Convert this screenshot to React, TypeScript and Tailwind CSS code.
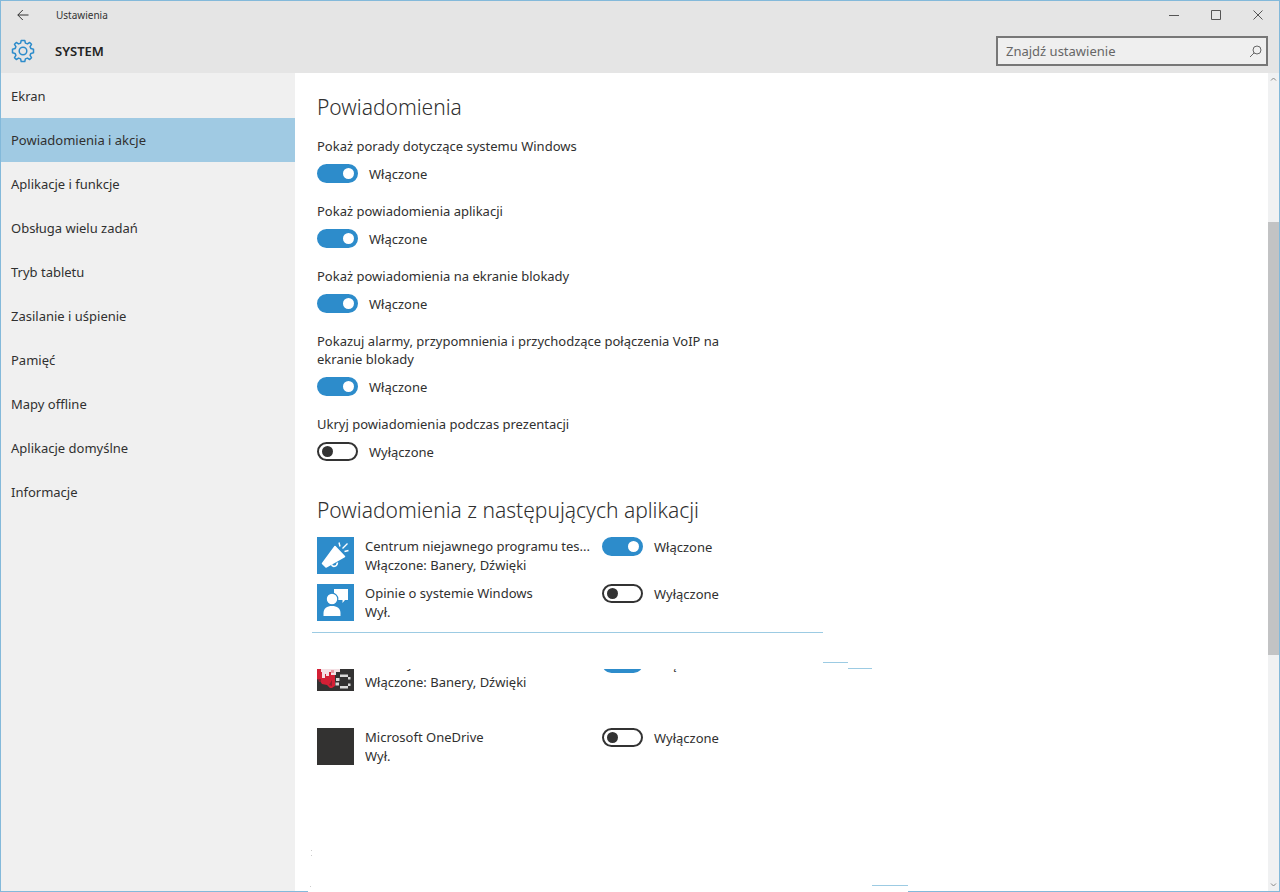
import { ReactNode, useState } from "react";

const navItems = [
  "Ekran",
  "Powiadomienia i akcje",
  "Aplikacje i funkcje",
  "Obsługa wielu zadań",
  "Tryb tabletu",
  "Zasilanie i uśpienie",
  "Pamięć",
  "Mapy offline",
  "Aplikacje domyślne",
  "Informacje",
];

const settings = [
  { id: "tips", label: "Pokaż porady dotyczące systemu Windows", on: true },
  { id: "apps", label: "Pokaż powiadomienia aplikacji", on: true },
  { id: "lock", label: "Pokaż powiadomienia na ekranie blokady", on: true },
  {
    id: "alarms",
    label: "Pokazuj alarmy, przypomnienia i przychodzące połączenia VoIP na ekranie blokady",
    on: true,
  },
  { id: "presentation", label: "Ukryj powiadomienia podczas prezentacji", on: false },
];

function Toggle({ id, initial, label }: { id: string; initial: boolean; label?: string }) {
  const [on, setOn] = useState(initial);
  return (
    <div className="flex h-[19px] items-center gap-[11px]">
      <input
        id={id}
        type="checkbox"
        role="switch"
        aria-label={label}
        checked={on}
        onChange={(e) => setOn(e.target.checked)}
        className="h-[19px] w-[41px] shrink-0 appearance-none rounded-full border-2 border-[#333] bg-white before:mt-[2px] before:ml-[3px] before:block before:size-[11px] before:rounded-full before:bg-[#333] checked:border-[#2d8ccb] checked:bg-[#2d8ccb] checked:before:ml-[24px] checked:before:bg-white"
      />
      <label htmlFor={id}>{on ? "Włączone" : "Wyłączone"}</label>
    </div>
  );
}

function AppRow({
  id,
  icon,
  name,
  status,
  on,
}: {
  id: string;
  icon: ReactNode;
  name: ReactNode;
  status: string;
  on: boolean;
}) {
  return (
    <li className="flex h-[37px] items-start">
      {icon}
      <div className="ml-[11px] w-[237px] shrink-0 pr-2 leading-[19px]">
        <p className="truncate">{name}</p>
        <p className="truncate">{status}</p>
      </div>
      <Toggle id={id} initial={on} label={status} />
    </li>
  );
}

function MegaphoneIcon() {
  return (
    <svg className="size-[37px] shrink-0" viewBox="0 0 37 37" aria-hidden="true">
      <rect width="37" height="37" fill="#2d8ccb" />
      <path d="M18 9.500 27.500 19.500 9 30 5.500 26.500Z" fill="#fff" stroke="#fff" strokeWidth="1.500" strokeLinejoin="round" />
      <path d="M14.500 27.500c1 3 5.500 2.500 6-2" fill="none" stroke="#fff" strokeWidth="1.600" />
      <path d="m23 9.500-1-4M25.500 11.500l5-5M27.500 14.500l4-1" stroke="#fff" strokeWidth="1.400" />
    </svg>
  );
}

function FeedbackIcon() {
  return (
    <svg className="size-[37px] shrink-0" viewBox="0 0 37 37" aria-hidden="true">
      <rect width="37" height="37" fill="#2d8ccb" />
      <path d="M17 5h14v11h-3l-2.500 3V16H17Z" fill="#fff" />
      <circle cx="15" cy="15" r="5.800" fill="#fff" stroke="#2d8ccb" strokeWidth="1.200" />
      <path d="M6.500 32v-3c0-4.500 3.500-7 8.500-7s8.500 2.500 8.500 7v3Z" fill="#fff" />
    </svg>
  );
}

function GameIcon() {
  return (
    <svg className="size-[37px] shrink-0" viewBox="0 0 37 37" aria-hidden="true">
      <rect width="37" height="37" fill="#333232" />
      <path d="M0 15h18v17l-3 2-2 0-3-3-5-1-2-3-3-2Z" fill="#d31f35" />
      <path d="M1 25h3v3H2ZM12 31l3-5v6Z" fill="#8f2030" />
      <path d="M4 14h19v4h-4v3h-5v-3h-2v4H9v-2H8v4H5v-6H4Z" fill="#f3dfe3" />
      <path d="M14 16h3v3h-3Z" fill="#e89aa5" />
      <path d="M23 20.500h8v2.500h-8ZM19 24h3.500v3H19ZM18.500 28.500h3.500v3h-3.500ZM23 32h8v2.500h-8ZM31 23h2.500v2.500H31ZM31 29.500h2.500v2.500H31Z" fill="#d9d9d9" />
    </svg>
  );
}

function GearIcon() {
  return (
    <svg className="size-6 shrink-0" viewBox="0 0 24 24" fill="none" stroke="#2d8ccb" strokeWidth="1.500" strokeLinejoin="round" aria-hidden="true">
      <path d="M10.200 1.500 9.600 4.100 7.600 4.900 5.300 3.500 3.500 5.300 4.900 7.600 4.100 9.600 1.500 10.200V13.800L4.100 14.400 4.900 16.400 3.500 18.700 5.300 20.500 7.600 19.100 9.600 19.900 10.200 22.500H13.800L14.400 19.900 16.400 19.100 18.700 20.500 20.500 18.700 19.100 16.400 19.900 14.400 22.500 13.800V10.200L19.900 9.600 19.100 7.600 20.500 5.300 18.700 3.500 16.400 4.900 14.400 4.100 13.800 1.500Z" />
      <circle cx="12" cy="12" r="3.800" />
    </svg>
  );
}

function TitleBar() {
  return (
    <div className="flex h-7 items-center text-[#333]">
      <button type="button" aria-label="Wstecz" className="flex h-full w-[43px] items-center justify-center">
        <svg width="12" height="12" viewBox="0 0 12 12" fill="none" stroke="currentColor">
          <path d="M11.500 6H.8M5.800 1 .8 6l5 5" />
        </svg>
      </button>
      <span className="ml-3 flex-1 text-[10px]">Ustawienia</span>
      <button type="button" aria-label="Minimalizuj" className="flex h-full w-[42px] items-center justify-center">
        <svg width="10" height="10" viewBox="0 0 10 10" stroke="#555">
          <path d="M0 5.500h10" />
        </svg>
      </button>
      <button type="button" aria-label="Maksymalizuj" className="flex h-full w-[42px] items-center justify-center">
        <svg width="10" height="10" viewBox="0 0 10 10" fill="none" stroke="#555">
          <path d="M.5.5h9v9h-9Z" />
        </svg>
      </button>
      <button type="button" aria-label="Zamknij" className="flex h-full w-[42px] items-center justify-center">
        <svg width="10" height="10" viewBox="0 0 10 10" stroke="#555">
          <path d="m.5.5 9 9M9.500.5l-9 9" />
        </svg>
      </button>
    </div>
  );
}

function Scrollbar() {
  return (
    <div className="flex w-[11px] shrink-0 flex-col bg-[#f0f1f2]" aria-hidden="true">
      <svg className="h-3 w-full" viewBox="0 0 11 12" fill="none" stroke="#888">
        <path d="m3 7.500 2.500-2.500L8 7.500" />
      </svg>
      <div className="flex-[137]" />
      <div className="flex-[433] bg-[#c2c3c4]" />
      <div className="flex-[224]" />
      <svg className="h-3 w-full" viewBox="0 0 11 12" fill="none" stroke="#888">
        <path d="m3 4.500 2.500 2.500L8 4.500" />
      </svg>
    </div>
  );
}

export default function App() {
  return (
    <div className="relative flex min-h-screen flex-col border border-[#83b9da] bg-white font-['Noto_Sans','Open_Sans',sans-serif] text-[13px] leading-[18px] text-[#303030]">
      {/* Header */}
      <header className="bg-[#e5e5e5]">
        <TitleBar />
        <div className="flex h-11 items-center pr-[11px] pl-[10px]">
          <GearIcon />
          <h1 className="ml-5 flex-1 font-semibold text-[#222]">SYSTEM</h1>
          <label className="flex h-[30px] w-[272px] items-center border-2 border-[#777] bg-[#efefef] pr-1 pl-2">
            <input
              type="search"
              aria-label="Znajdź ustawienie"
              placeholder="Znajdź ustawienie"
              className="min-w-0 flex-1 bg-transparent outline-none placeholder:text-[#666]"
            />
            <svg width="13" height="13" viewBox="0 0 13 13" fill="none" stroke="#666" aria-hidden="true">
              <circle cx="8" cy="5" r="4" />
              <path d="M5.200 7.800 1 12" />
            </svg>
          </label>
        </div>
      </header>

      <div className="flex flex-1">
        {/* Sidebar */}
        <nav className="w-[294px] shrink-0 bg-[#f0f0f0] pt-px">
          {navItems.map((item, i) => (
            <a
              key={item}
              href="#"
              className={`flex h-11 items-center px-[10px] ${i === 1 ? "bg-[#a0cae3]" : ""}`}
            >
              {item}
            </a>
          ))}
        </nav>

        {/* Content */}
        <main className="flex-1 px-[22px] pt-5">
          <h2 className="text-[21px] leading-7 font-light">Powiadomienia</h2>
          <div className="mt-4 flex max-w-[420px] flex-col gap-[19px]">
            {settings.map((s) => (
              <div key={s.id}>
                <label htmlFor={s.id} className="mb-[9px] block">
                  {s.label}
                </label>
                <Toggle id={s.id} initial={s.on} />
              </div>
            ))}
          </div>

          <h2 className="mt-[35px] text-[21px] leading-7 font-light">Powiadomienia z następujących aplikacji</h2>
          <ul className="mt-[13px] flex flex-col gap-[10px]">
            <AppRow
              id="insider"
              icon={<MegaphoneIcon />}
              name="Centrum niejawnego programu tes..."
              status="Włączone: Banery, Dźwięki"
              on
            />
            <AppRow id="feedback" icon={<FeedbackIcon />} name="Opinie o systemie Windows" status="Wył." on={false} />
          </ul>
          <ul className="mt-12 flex h-[22px] flex-col justify-end overflow-hidden">
            <AppRow
              id="game"
              icon={<GameIcon />}
              name={<span className="pl-[42px]">y</span>}
              status="Włączone: Banery, Dźwięki"
              on
            />
          </ul>
          <ul className="mt-[37px]">
            <AppRow
              id="onedrive"
              icon={<div className="size-[37px] shrink-0 bg-[#333231]" />}
              name="Microsoft OneDrive"
              status="Wył."
              on={false}
            />
          </ul>
        </main>

        <Scrollbar />
      </div>

      {/* Stepped outline over the content */}
      <svg className="pointer-events-none absolute top-[630px] left-[311px]" width="562" height="40" fill="none" stroke="#9ccbe3" aria-hidden="true">
        <path d="M0 1.500h511M511 31.500h25M536 37.500h24" />
      </svg>
      <svg className="pointer-events-none absolute -bottom-px left-[307px]" width="600" height="44" fill="none" aria-hidden="true">
        <path d="M0 43.500h600" stroke="#fff" />
        <path d="M564 37.500h36" stroke="#9ccbe3" />
        <path d="M3 2.500h1M3 7.500h1M2 38.500h1" stroke="#ccc" />
      </svg>
    </div>
  );
}
